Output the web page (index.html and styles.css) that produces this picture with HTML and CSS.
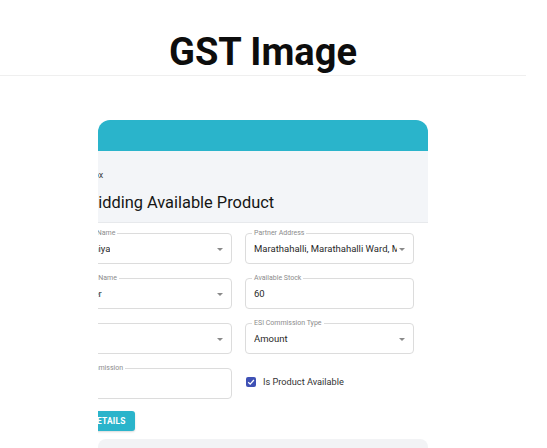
FILE: index.html
```html
<!DOCTYPE html>
<html lang="en">
<head>
  <meta charset="UTF-8" />
  <meta name="viewport" content="width=device-width, initial-scale=1.0" />
  <title>GST Image</title>
  <link rel="stylesheet" href="styles.css">
</head>
<body>
  <div class="wrap">
    <header class="top">
      <h1>GST Image</h1>
    </header>

    <main class="page">
      <div class="shot">
        <div class="shot-bar"></div>
        <div class="shot-body">
          <div class="shot-head">
            <div class="crumb">Inventory Box</div>
            <h2>Bidding Available Product</h2>
          </div>
          <form class="grid">
            <div class="field select">
              <span class="label">Partner Name</span>
              <span class="value">Sowmiya</span>
            </div>
            <div class="field select">
              <span class="label">Partner Address</span>
              <span class="value">Marathahalli, Marathahalli Ward, Mahadevapura</span>
            </div>
            <div class="field select">
              <span class="label">Product Name</span>
              <span class="value">Paneer</span>
            </div>
            <div class="field">
              <span class="label">Available Stock</span>
              <span class="value">60</span>
            </div>
            <div class="field select">
              <span class="label">Unit</span>
              <span class="value">Kg</span>
            </div>
            <div class="field select">
              <span class="label">ESI Commission Type</span>
              <span class="value">Amount</span>
            </div>
            <div class="field">
              <span class="label">ESI Commission</span>
              <span class="value"></span>
            </div>
            <label class="check">
              <span class="box">
                <svg viewBox="0 0 10 10" width="10" height="10"><path d="M2.2 5.2 L4.2 7.1 L7.9 3" fill="none" stroke="#fff" stroke-width="1.3"/></svg>
              </span>
              Is Product Available
            </label>
            <div class="actions">
              <button type="button">ADD DETAILS</button>
            </div>
          </form>
        </div>
        <div class="shot-foot"></div>
      </div>
    </main>
  </div>
</body>
</html>
```

FILE: styles.css
```css
body { margin: 0; font-family: Roboto, "Liberation Sans", Arial, sans-serif; background: #fff; color: #111; }
.wrap { width: 526px; }
.top { padding-top: 30px; height: 45px; border-bottom: 1px solid #efefef; text-align: center; }
.top h1 { margin: 0; font-size: 38px; line-height: 44px; font-weight: 700; color: #0d0d0d; }
.page { padding-top: 44px; }

.shot { width: 330px; margin: 0 auto; overflow: hidden; border-radius: 12px 12px 0 0; background: #fff; }
.shot-bar { height: 31px; background: #2ab4cb; }
.shot-body { width: 379px; margin-left: -49px; }
.shot-head { background: #f3f5f8; padding: 18px 14px 6px; border-bottom: 1px solid #e7e9ec; height: 47px; }
.crumb { font-size: 9px; line-height: 12px; color: #444; text-indent: -14px; }
.shot-head h2 { margin: 10px 0 0; padding-left: 25px; font-size: 16.4px; line-height: 24px; font-weight: 400; color: #151515; }

.grid { display: grid; grid-template-columns: 169px 169px; column-gap: 13px; row-gap: 14px; padding: 10px 14px 0; }
.field { position: relative; height: 31px; box-sizing: border-box; border: 1px solid #dcdcdc; border-radius: 4px; display: flex; align-items: center; padding: 0 8px; }
.label { position: absolute; top: -5px; left: 6px; padding: 0 2px; background: #fff; font-size: 7px; line-height: 9px; color: #8c8c8c; }
.value { font-size: 9.5px; color: #2a2a2a; white-space: nowrap; overflow: hidden; max-width: 143px; }
.select::after { content: ""; position: absolute; right: 8px; top: 14px; border-left: 3px solid transparent; border-right: 3px solid transparent; border-top: 3px solid #8a8a8a; }

.check { display: flex; align-items: center; gap: 7px; height: 31px; padding: 0 0 4px 1px; box-sizing: border-box; font-size: 9.2px; color: #333; }
.box { width: 10px; height: 10px; border-radius: 2px; background: #3f51b5; display: flex; }

.actions { grid-column: 1 / -1; margin-top: -4px; }
.actions button { height: 20px; border: none; border-radius: 3px; background: #2ab4cb; color: #fff; font-family: inherit; font-size: 8.4px; font-weight: 700; letter-spacing: 0.2px; padding: 0 9px; box-shadow: 0 1px 2px rgba(0,0,0,0.15); }

.shot-foot { margin-top: 8px; height: 20px; background: #f2f3f5; border-radius: 8px 8px 0 0; }
```
